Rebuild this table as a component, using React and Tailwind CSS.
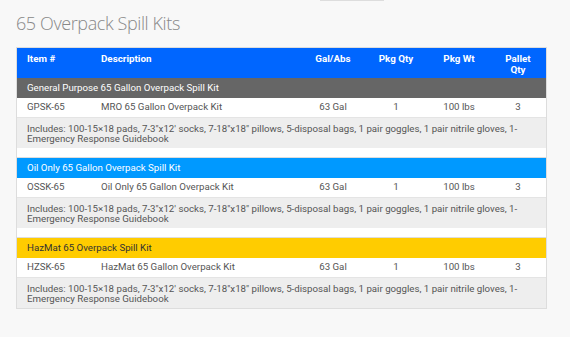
import React from "react";

const cols = "grid grid-cols-[74px_212px_60px_66px_60px_58px]";

const groups = [
  { title: "General Purpose 65 Gallon Overpack Spill Kit", bg: "bg-[#666666]", fg: "text-white", item: "GPSK-65", desc: "MRO 65 Gallon Overpack Kit" },
  { title: "Oil Only 65 Gallon Overpack Spill Kit", bg: "bg-[#0099ff]", fg: "text-white", item: "OSSK-65", desc: "Oil Only 65 Gallon Overpack Kit" },
  { title: "HazMat 65 Overpack Spill Kit", bg: "bg-[#ffcc00]", fg: "text-[#333333]", item: "HZSK-65", desc: "HazMat 65 Gallon Overpack Kit" },
];

export default function App() {
  return (
    <div className="w-[570px] h-[337px] bg-[#f8f8f8] relative overflow-hidden" style={{ fontFamily: "Roboto, 'Liberation Sans', sans-serif" }}>
      <div className="absolute left-[320px] top-0 w-[64px] h-px bg-[#dddddd]" />
      <div className="pl-4 pt-[11px]">
        <h1 className="text-[18px] leading-[24px] font-light text-[#888888] tracking-[-0.4px]" style={{ fontFamily: "'Open Sans', sans-serif" }}>
          65 Overpack Spill Kits
        </h1>
        <div className="mt-[12px] w-[531px] border border-[#dddddd] bg-white">
          <div className={`${cols} bg-[#0066ff] h-[30px] text-white font-bold text-[9.8px] leading-[11px] pt-[5px]`}>
            <div className="pl-[10px]">Item #</div>
            <div className="pl-[10px]">Description</div>
            <div className="text-center">Gal/Abs</div>
            <div className="text-center">Pkg Qty</div>
            <div className="text-center">Pkg Wt</div>
            <div className="text-center">Pallet<br />Qty</div>
          </div>
          {groups.map((g, i) => (
            <div key={i}>
              {i > 0 && <div className="h-[10px] bg-white border-b border-[#dddddd]" />}
              <div className={`${g.bg} ${g.fg} h-[20px] pl-[10px] text-[9.7px] leading-[20px]`}>{g.title}</div>
              <div className={`${cols} h-[20px] items-center text-[9.7px] text-[#555555] bg-white border-b border-[#e4e4e4]`}>
                <div className="pl-[10px]">{g.item}</div>
                <div className="pl-[10px]">{g.desc}</div>
                <div className="text-center">63 Gal</div>
                <div className="text-center">1</div>
                <div className="text-center">100 lbs</div>
                <div className="text-center">3</div>
              </div>
              <div className="h-[30px] bg-[#eeeeee] pl-[10px] pt-[6px] text-[9.7px] leading-[9.5px] text-[#555555] whitespace-nowrap">
                Includes: 100-15×18 pads, 7-3"x12' socks, 7-18"x18" pillows, 5-disposal bags, 1 pair goggles, 1 pair nitrile gloves, 1-
                <br />
                Emergency Response Guidebook
              </div>
            </div>
          ))}
        </div>
      </div>
    </div>
  );
}
